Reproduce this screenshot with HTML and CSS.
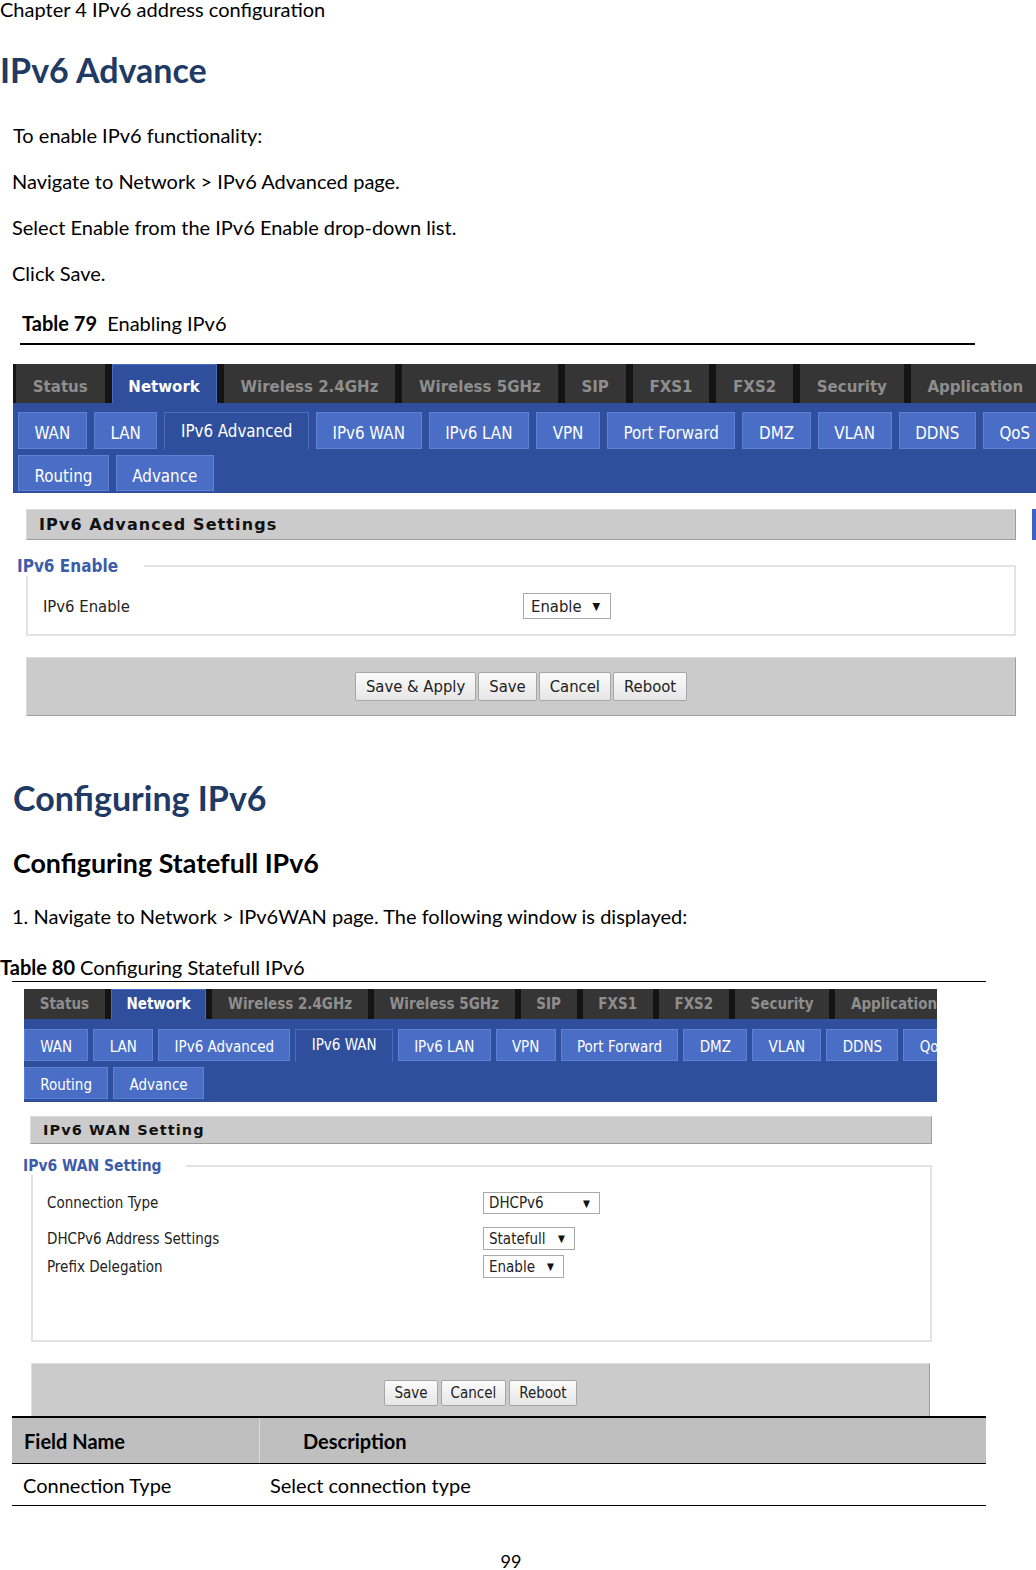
FILE: index.html
```
<!DOCTYPE html>
<html>
<head>
<meta charset="utf-8">
<title>IPv6 address configuration</title>
<link rel="stylesheet" href="styles.css">
</head>
<body>
<div class="doc">
  <div class="chapter">Chapter 4 IPv6 address configuration</div>
  <h1 class="h-blue h-first">IPv6 Advance</h1>
  <p class="txt t-first">To enable IPv6 functionality:</p>
  <p class="txt">Navigate to Network &gt; IPv6 Advanced page.</p>
  <p class="txt">Select Enable from the IPv6 Enable drop-down list.</p>
  <p class="txt">Click Save.</p>
  <div class="cap cap79"><b>Table 79</b>&nbsp; Enabling IPv6</div>

  <div class="shot shot-a">
    <div class="mainnav">
      <span class="mtab">Status</span>
      <span class="mtab on">Network</span>
      <span class="mtab">Wireless 2.4GHz</span>
      <span class="mtab">Wireless 5GHz</span>
      <span class="mtab">SIP</span>
      <span class="mtab">FXS1</span>
      <span class="mtab">FXS2</span>
      <span class="mtab">Security</span>
      <span class="mtab">Application</span>
    </div>
    <div class="subnav">
      <div class="subrow">
        <span class="stab">WAN</span>
        <span class="stab">LAN</span>
        <span class="stab on">IPv6 Advanced</span>
        <span class="stab">IPv6 WAN</span>
        <span class="stab">IPv6 LAN</span>
        <span class="stab">VPN</span>
        <span class="stab">Port Forward</span>
        <span class="stab">DMZ</span>
        <span class="stab">VLAN</span>
        <span class="stab">DDNS</span>
        <span class="stab">QoS</span>
      </div>
      <div class="subrow">
        <span class="stab">Routing</span>
        <span class="stab">Advance</span>
      </div>
    </div>
    <div class="headrow">
      <div class="sechead">IPv6 Advanced Settings</div>
      <div class="edge"></div>
    </div>
    <fieldset class="fs">
      <legend>IPv6 Enable</legend>
      <div class="fbody">
        <div class="frow">
          <span class="flabel">IPv6 Enable</span>
          <span class="sel sel-enable-a">Enable<i class="arr">&#9660;</i></span>
        </div>
      </div>
    </fieldset>
    <div class="btnbar">
      <span class="btn">Save &amp; Apply</span>
      <span class="btn">Save</span>
      <span class="btn">Cancel</span>
      <span class="btn">Reboot</span>
    </div>
  </div>

  <h2 class="h-blue h-sec">Configuring IPv6</h2>
  <h3 class="h-sub">Configuring Statefull IPv6</h3>
  <p class="txt t-nav">1. Navigate to Network &gt; IPv6WAN page. The following window is displayed:</p>
  <div class="cap cap80"><b>Table 80</b> Configuring Statefull IPv6</div>

  <div class="shot shot-b">
    <div class="mainnav">
      <span class="mtab">Status</span>
      <span class="mtab on">Network</span>
      <span class="mtab">Wireless 2.4GHz</span>
      <span class="mtab">Wireless 5GHz</span>
      <span class="mtab">SIP</span>
      <span class="mtab">FXS1</span>
      <span class="mtab">FXS2</span>
      <span class="mtab">Security</span>
      <span class="mtab">Application</span>
    </div>
    <div class="subnav">
      <div class="subrow">
        <span class="stab">WAN</span>
        <span class="stab">LAN</span>
        <span class="stab">IPv6 Advanced</span>
        <span class="stab on">IPv6 WAN</span>
        <span class="stab">IPv6 LAN</span>
        <span class="stab">VPN</span>
        <span class="stab">Port Forward</span>
        <span class="stab">DMZ</span>
        <span class="stab">VLAN</span>
        <span class="stab">DDNS</span>
        <span class="stab">QoS</span>
      </div>
      <div class="subrow">
        <span class="stab">Routing</span>
        <span class="stab">Advance</span>
      </div>
    </div>
    <div class="headrow">
      <div class="sechead">IPv6 WAN Setting</div>
    </div>
    <fieldset class="fs">
      <legend>IPv6 WAN Setting</legend>
      <div class="fbody">
        <div class="frow r1">
          <span class="flabel">Connection Type</span>
          <span class="sel sel-dhcp">DHCPv6<i class="arr">&#9660;</i></span>
        </div>
        <div class="frow r2">
          <span class="flabel">DHCPv6 Address Settings</span>
          <span class="sel sel-state">Statefull<i class="arr">&#9660;</i></span>
        </div>
        <div class="frow r3">
          <span class="flabel">Prefix Delegation</span>
          <span class="sel sel-enable-b">Enable<i class="arr">&#9660;</i></span>
        </div>
      </div>
    </fieldset>
    <div class="btnbar">
      <span class="btn">Save</span>
      <span class="btn">Cancel</span>
      <span class="btn">Reboot</span>
    </div>
  </div>

  <div class="ftable">
    <div class="ft-row ft-head">
      <div class="ft-c1">Field Name</div>
      <div class="ft-c2">Description</div>
    </div>
    <div class="ft-row ft-body">
      <div class="ft-c1">Connection Type</div>
      <div class="ft-c2">Select connection type</div>
    </div>
  </div>

  <div class="pnum">99</div>
</div>
</body>
</html>
```

FILE: styles.css
```
html, body {
  margin: 0;
  padding: 0;
  background: #ffffff;
}

body {
  width: 1036px;
  font-family: Lato, "Liberation Sans", sans-serif;
  color: #000;
}

.doc {
  width: 1036px;
}

.chapter {
  font-size: 20px;
  line-height: 18px;
  height: 18px;
  white-space: nowrap;
}

.h-blue {
  margin: 0;
  font-size: 34px;
  line-height: 40px;
  font-weight: 700;
  color: #1f3a64;
}

.h-first {
  margin-top: 32px;
}

.txt {
  margin: 22px 0 0 12px;
  font-size: 20px;
  line-height: 24px;
}

.t-first {
  margin-top: 33px;
  margin-left: 13px;
}

.cap {
  font-size: 20px;
  line-height: 24px;
  box-sizing: border-box;
  white-space: nowrap;
}

.cap79 {
  margin: 26px 0 0 20px;
  width: 955px;
  padding: 0 0 8px 2px;
  border-bottom: 2px solid #000;
}

.cap80 {
  margin: 27px 0 0 12px;
  width: 974px;
  padding-bottom: 2px;
  border-bottom: 1px solid #000;
  text-indent: -12px;
}

/* ---------- router UI screenshots ---------- */

.shot {
  overflow: hidden;
  font-family: "DejaVu Sans Condensed", "DejaVu Sans", sans-serif;
  white-space: nowrap;
}

.shot-a {
  margin: 19px 0 0 13px;
  width: 1023px;
  height: 352px;
}

.shot-b {
  margin: 7px 0 0 24px;
  width: 913px;
  height: 427px;
}

.mainnav {
  display: flex;
  background: #141414;
}

.mtab {
  flex: none;
  box-sizing: border-box;
  background: #353535;
  color: #8e8e8e;
  font-weight: 700;
}

.mtab.on {
  background: #2f4f9c;
  color: #ffffff;
  border: 1px solid #4b6cc1;
  border-bottom: 0;
}

.subnav {
  box-sizing: border-box;
  background: #2f4f9c;
}

.subrow {
  display: flex;
}

.stab {
  flex: none;
  box-sizing: border-box;
  background: #4a6ec6;
  border: 1px solid #5d81d4;
  color: #ffffff;
}

.stab.on {
  background: #2f4f9c;
  border-color: #4b6cc1;
  border-bottom: 0;
}

.headrow {
  display: flex;
}

.sechead {
  box-sizing: border-box;
  background: #cbcbcb;
  border: 1px solid;
  border-color: #dcdcdc #9d9d9d #9d9d9d #dcdcdc;
  font-family: "DejaVu Sans", sans-serif;
  font-weight: 700;
  color: #111;
}

.edge {
  flex: none;
  width: 10px;
  background: #3c62c4;
}

.fs {
  margin: 0;
  padding: 0;
  min-inline-size: 0;
  box-sizing: border-box;
  border: 2px solid #e2e2e2;
}

.fs legend {
  padding: 0;
  background: #ffffff;
  color: #3d5ca8;
  font-weight: 700;
}

.frow {
  display: grid;
  align-items: center;
  color: #222;
}

.sel {
  display: flex;
  align-items: center;
  box-sizing: border-box;
  background: #ffffff;
  border: 1px solid #a9a9a9;
  color: #222;
}

.arr {
  margin-left: auto;
  font-style: normal;
  color: #111;
}

.btnbar {
  display: flex;
  justify-content: center;
  box-sizing: border-box;
  background: #cbcbcb;
  border: 1px solid;
  border-color: #dedede #9d9d9d #9d9d9d #dedede;
}

.btn {
  box-sizing: border-box;
  background: linear-gradient(#fbfbfb, #e6e6e6);
  border: 1px solid #a6a6a6;
  border-radius: 2px;
  color: #222;
}

/* screenshot A sizes */
.shot-a .mainnav {
  height: 39px;
  gap: 7px;
  padding-left: 3px;
}

.shot-a .mtab {
  font-size: 16.7px;
  line-height: 34px;
  padding: 5px 16.8px 0;
}

.shot-a .mtab.on {
  line-height: 33px;
  padding: 5px 15.8px 0;
}

.shot-a .subnav {
  height: 90px;
  padding: 9px 0 0 5px;
}

.shot-a .subrow {
  gap: 7px;
  height: 37px;
}

.shot-a .subrow + .subrow {
  margin-top: 6px;
  height: 36px;
}

.shot-a .stab {
  font-size: 16.8px;
  line-height: 29px;
  padding: 6px 15.6px 0;
}

.shot-a .subrow + .subrow .stab {
  padding-left: 15.5px;
  padding-right: 15.5px;
}

.shot-a .stab.on {
  line-height: 30px;
  height: 38px;
  padding: 3px 15.5px 0;
}

.shot-a .headrow {
  margin: 16px 0 0 13px;
  height: 31px;
  gap: 16px;
}

.shot-a .sechead {
  width: 990px;
  flex: none;
  font-size: 16px;
  letter-spacing: 1.1px;
  line-height: 29px;
  padding-left: 12px;
}

.shot-a .fs {
  margin: 16px 0 0 13px;
  width: 990px;
}

.shot-a .fs legend {
  margin-left: -11px;
  padding-right: 26px;
  font-size: 17px;
  line-height: 20px;
}

.shot-a .fbody {
  padding: 17px 0 15px 15px;
}

.shot-a .frow {
  grid-template-columns: 480px max-content;
  height: 26px;
  font-size: 16.5px;
}

.shot-a .sel {
  height: 26px;
  font-size: 16.5px;
  padding: 0 10px 0 7px;
}

.sel-enable-a {
  width: 88px;
}

.shot-a .arr {
  font-size: 11px;
}

.shot-a .btnbar {
  margin: 21px 0 0 13px;
  width: 990px;
  height: 59px;
  padding-top: 14px;
  gap: 2px;
}

.shot-a .btn {
  height: 29px;
  line-height: 28px;
  font-size: 16.5px;
  padding: 0 10px;
}

/* screenshot B sizes */
.shot-b .mainnav {
  height: 30px;
  gap: 6px;
}

.shot-b .mtab {
  font-size: 15px;
  line-height: 30px;
  padding: 0 15.7px;
}

.shot-b .mtab.on {
  line-height: 29px;
  padding: 0 14.7px;
}

.shot-b .subnav {
  height: 83px;
  padding: 10px 0 0 0;
}

.shot-b .subrow {
  gap: 5px;
  height: 32px;
}

.shot-b .subrow + .subrow {
  margin-top: 6px;
}

.shot-b .stab {
  font-size: 15px;
  line-height: 28px;
  padding: 3px 15.3px 0;
}

.shot-b .stab.on {
  line-height: 28px;
  height: 33px;
  padding-top: 1px;
}

.shot-b .headrow {
  margin: 14px 0 0 6px;
  height: 28px;
}

.shot-b .sechead {
  width: 902px;
  font-size: 14.5px;
  letter-spacing: 1.1px;
  line-height: 26px;
  padding-left: 12px;
}

.shot-b .fs {
  margin: 13px 0 0 7px;
  width: 901px;
}

.shot-b .fs legend {
  margin-left: -10px;
  padding-right: 24px;
  font-size: 15.5px;
  line-height: 18px;
}

.shot-b .fbody {
  padding: 17px 0 62px 14px;
}

.shot-b .frow {
  grid-template-columns: 436px max-content;
  font-size: 15px;
}

.shot-b .r1 {
  height: 22px;
  margin-bottom: 13px;
}

.shot-b .r2 {
  height: 23px;
  margin-bottom: 5px;
}

.shot-b .r3 {
  height: 23px;
}

.shot-b .sel {
  height: 100%;
  font-size: 15px;
  padding: 0 9px 0 5px;
}

.shot-b .arr {
  font-size: 10px;
}

.sel-dhcp {
  width: 117px;
}

.sel-state {
  width: 92px;
}

.sel-enable-b {
  width: 81px;
}

.shot-b .btnbar {
  margin: 21px 0 0 7px;
  width: 899px;
  height: 53px;
  padding-top: 16px;
  gap: 3px;
  border-bottom: 0;
}

.shot-b .btn {
  height: 26px;
  line-height: 25px;
  font-size: 15px;
  padding: 0 9px;
}

/* ---------- headings after screenshot A ---------- */

.h-sec {
  margin-top: 62px;
  margin-left: 13px;
}

.h-sub {
  margin: 30px 0 0 13px;
  font-size: 26.8px;
  line-height: 30px;
  font-weight: 700;
}

.t-nav {
  margin-top: 26px;
}

/* ---------- field table ---------- */

.ftable {
  margin-left: 12px;
  width: 974px;
  font-size: 20px;
  border-top: 2px solid #000;
}

.ft-row {
  display: grid;
  grid-template-columns: 247px 1fr;
  border-bottom: 1px solid #000;
}

.ft-head {
  height: 45px;
  background: #bfbfbf;
  font-weight: 700;
  align-items: center;
}

.ft-head .ft-c1 {
  padding-left: 12px;
}

.ft-head .ft-c2 {
  height: 100%;
  display: flex;
  align-items: center;
  border-left: 1px solid #dadada;
  padding-left: 43px;
}

.ft-body {
  height: 41px;
  align-items: center;
}

.ft-body .ft-c1 {
  padding-left: 11px;
}

.ft-body .ft-c2 {
  padding-left: 11px;
}

.pnum {
  margin-top: 45px;
  width: 1022px;
  text-align: center;
  font-size: 18px;
  line-height: 20px;
}
```
